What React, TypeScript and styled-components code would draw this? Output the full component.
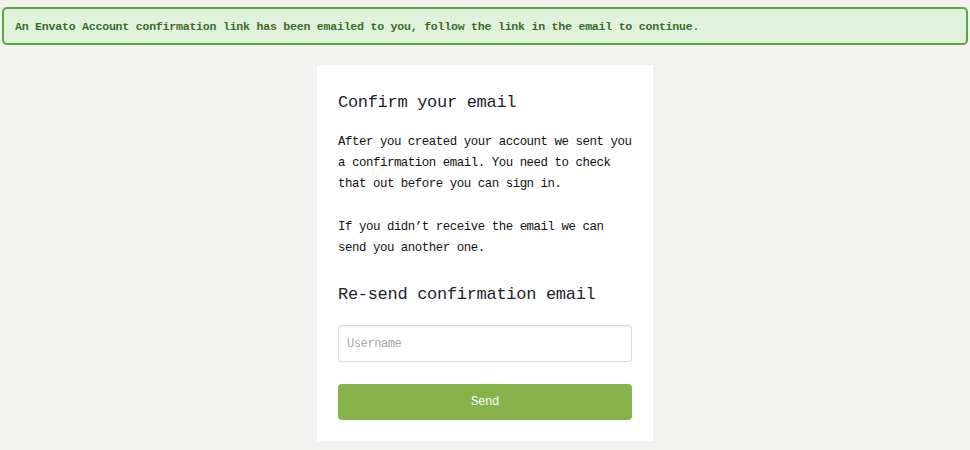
import styled, { createGlobalStyle } from "styled-components";

const GlobalStyle = createGlobalStyle`
  html, body {
    margin: 0;
    padding: 0;
    background: #f2f2f0;
    font-family: "Liberation Mono", "DejaVu Sans Mono", monospace;
  }
`;

const Page = styled.div`
  width: 970px;
  height: 450px;
  padding: 7px 2px 0;
  box-sizing: border-box;
  display: flex;
  flex-direction: column;
  align-items: center;
  gap: 20px;
`;

const Notice = styled.div`
  align-self: stretch;
  height: 38px;
  box-sizing: border-box;
  display: flex;
  align-items: center;
  padding: 0 11px;
  background: #e0f2dc;
  border: 2px solid #55aa3f;
  border-radius: 5px;
  color: #3d6b2a;
  font-size: 11.6px;
  font-weight: bold;
  letter-spacing: -0.25px;
`;

const Card = styled.div`
  width: 336px;
  box-sizing: border-box;
  background: #ffffff;
  padding: 26px 21px 21px;
  display: flex;
  flex-direction: column;
`;

const Heading = styled.h2<{ $top?: number }>`
  margin: ${(p) => p.$top ?? 0}px 0 0;
  font-size: 17px;
  line-height: 24px;
  font-weight: normal;
  letter-spacing: -0.3px;
  color: #1e1e2e;
`;

const Text = styled.p<{ $top: number }>`
  margin: ${(p) => p.$top}px 0 0;
  font-size: 12.4px;
  line-height: 21px;
  letter-spacing: -0.45px;
  color: #111;
`;

const Input = styled.input`
  margin-top: 18px;
  height: 37px;
  box-sizing: border-box;
  border: 1px solid #dcdcdc;
  border-radius: 3px;
  box-shadow: inset 0 1px 2px rgba(0, 0, 0, 0.08);
  padding: 0 8px;
  font-family: "Liberation Mono", "DejaVu Sans Mono", monospace;
  font-size: 12px;
  letter-spacing: -0.4px;
  outline: none;
  &::placeholder {
    color: #a8a8a8;
  }
`;

const Button = styled.button`
  margin-top: 22px;
  height: 36px;
  border: none;
  border-radius: 4px;
  background: #86b34a;
  color: #fff;
  font-family: "Liberation Mono", "DejaVu Sans Mono", monospace;
  font-size: 12.4px;
  letter-spacing: -0.4px;
  cursor: pointer;
`;

function App() {
  return (
    <>
      <GlobalStyle />
      <Page>
        <Notice>
          An Envato Account confirmation link has been emailed to you, follow
          the link in the email to continue.
        </Notice>
        <Card>
          <Heading>Confirm your email</Heading>
          <Text $top={17}>
            After you created your account we sent you a confirmation email.
            You need to check that out before you can sign in.
          </Text>
          <Text $top={22}>
            If you didn’t receive the email we can send you another one.
          </Text>
          <Heading $top={24}>Re-send confirmation email</Heading>
          <Input placeholder="Username" />
          <Button>Send</Button>
        </Card>
      </Page>
    </>
  );
}

export default App;
